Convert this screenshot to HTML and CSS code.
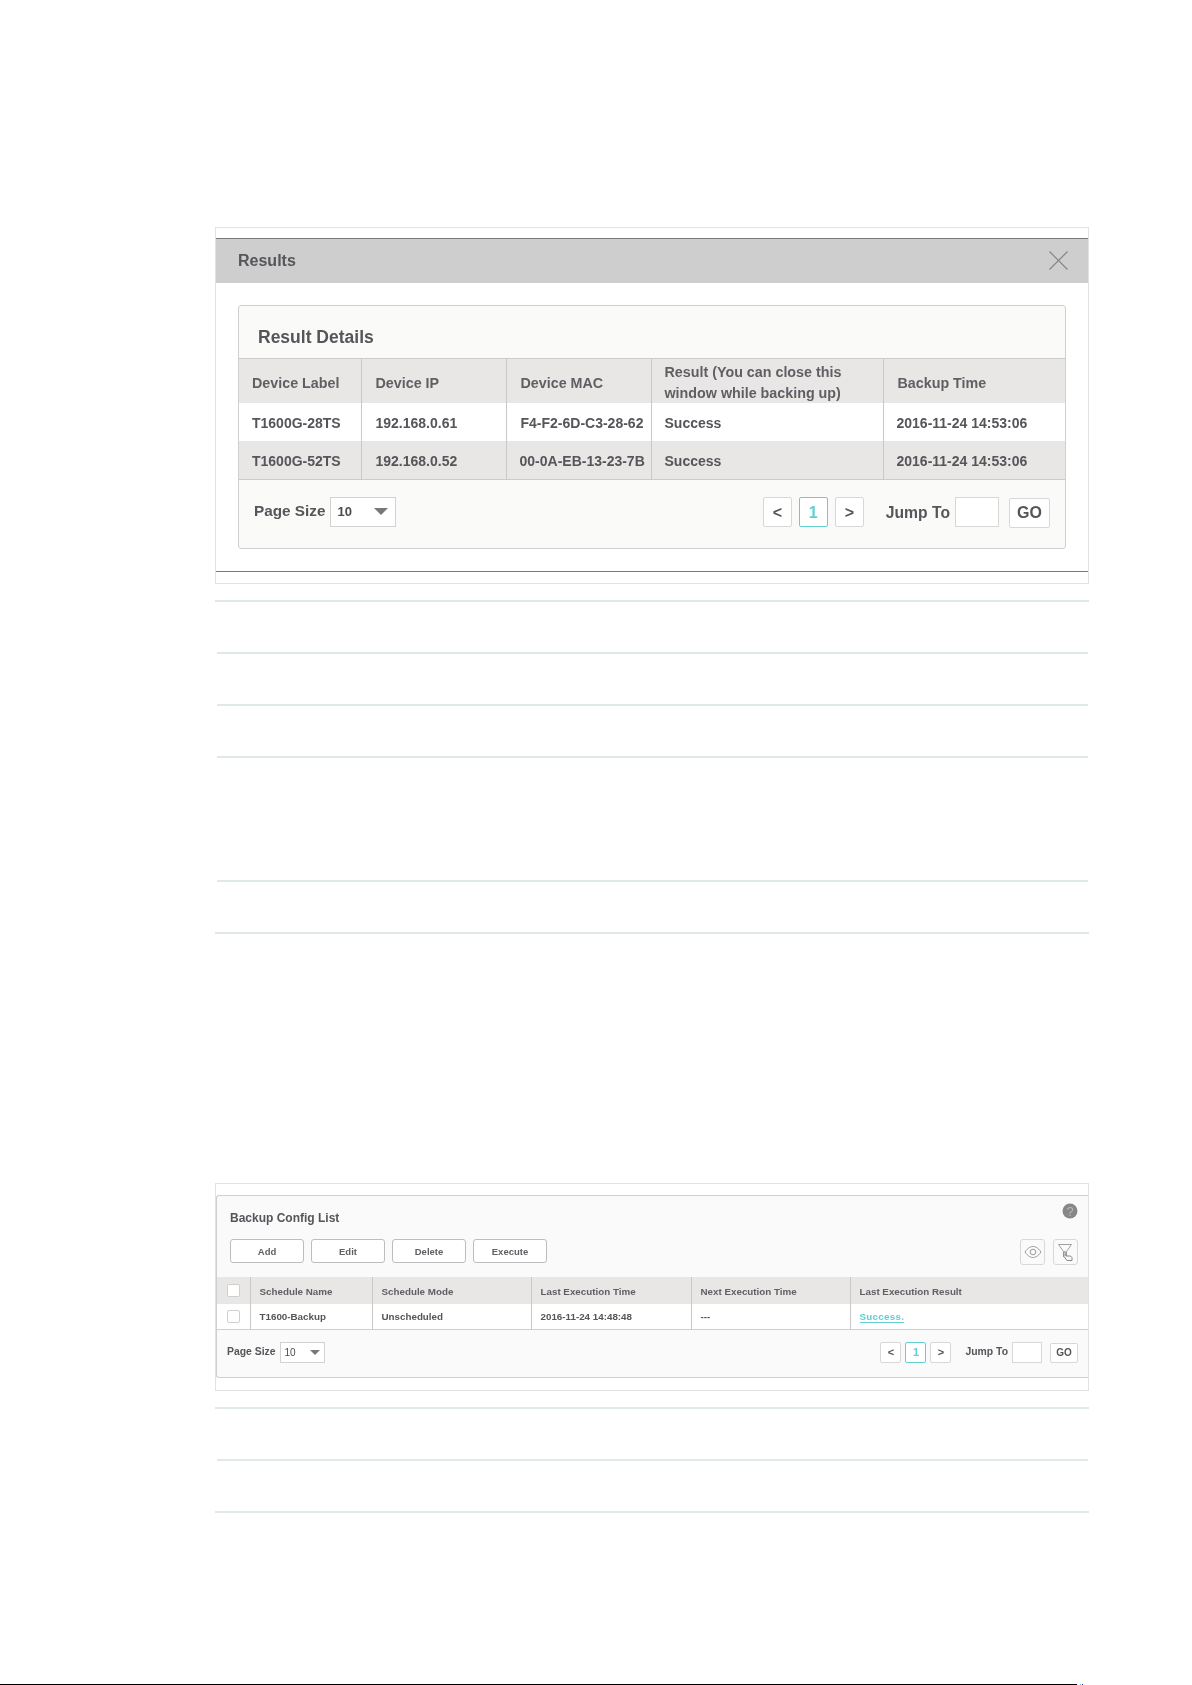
FILE: index.html
```html
<!DOCTYPE html>
<html lang="en">
<head>
<meta charset="utf-8">
<title>Backup Config</title>
<link rel="stylesheet" href="styles.css">
</head>
<body>
<main class="page">
  <figure class="frame frame-results">
    <div class="dialog">
      <header class="dialog-head">
        <h2 class="dialog-title">Results</h2>
        <svg class="close" width="19" height="19" viewBox="0 0 19 19"><path d="M.5.5 18.500 18.500M18.500.5 .5 18.500" fill="none" stroke="#858585" stroke-width="1.200"/></svg>
      </header>
      <section class="panel panel-lg">
        <h3 class="panel-title">Result Details</h3>
        <table class="grid grid-lg">
          <colgroup><col class="c1"><col class="c2"><col class="c3"><col class="c4"><col class="c5"></colgroup>
          <thead>
            <tr><th>Device Label</th><th>Device IP</th><th>Device MAC</th><th class="two-line">Result (You can close this window while backing up)</th><th>Backup Time</th></tr>
          </thead>
          <tbody>
            <tr><td>T1600G-28TS</td><td>192.168.0.61</td><td>F4-F2-6D-C3-28-62</td><td>Success</td><td>2016-11-24 14:53:06</td></tr>
            <tr class="alt"><td>T1600G-52TS</td><td>192.168.0.52</td><td>00-0A-EB-13-23-7B</td><td>Success</td><td>2016-11-24 14:53:06</td></tr>
          </tbody>
        </table>
        <footer class="pager pager-lg">
          <span class="label">Page Size</span>
          <span class="select">10<i class="caret"></i></span>
          <span class="spacer"></span>
          <span class="pg">&lt;</span><span class="pg on">1</span><span class="pg">&gt;</span>
          <span class="label jump">Jump To</span>
          <span class="jump-input"></span>
          <span class="go">GO</span>
        </footer>
      </section>
    </div>
  </figure>

  <div class="rule r1"></div>
  <div class="rule inset r2"></div>
  <div class="rule inset r3"></div>
  <div class="rule inset r4"></div>
  <div class="rule inset r5"></div>
  <div class="rule r6"></div>

  <figure class="frame frame-list">
    <section class="panel panel-sm">
      <div class="list-top">
        <h3 class="list-title">Backup Config List</h3>
        <svg class="help" width="16" height="16" viewBox="0 0 16 16"><circle cx="8" cy="8" r="7.500" fill="#87878a"/><text x="8" y="12.500" text-anchor="middle" class="help-mark">?</text></svg>
      </div>
      <div class="toolbar">
        <span class="btn">Add</span><span class="btn">Edit</span><span class="btn">Delete</span><span class="btn">Execute</span>
        <span class="spacer"></span>
        <span class="icon-btn"><svg width="18" height="14" viewBox="0 0 18 14"><path d="M1 7C4 2.500 7 1.500 9 1.500S14 2.500 17 7C14 11.500 11 12.500 9 12.500S4 11.500 1 7Z" fill="none" stroke="#9a9a9a"/><circle cx="9" cy="7" r="2.800" fill="none" stroke="#9a9a9a"/></svg></span>
        <span class="icon-btn"><svg width="16" height="18" viewBox="0 0 16 18"><path d="M.5 1.500H13.500L8.500 8.500V13M.5 1.500 5.500 8.500V14" fill="none" stroke="#a0a0a0"/><path d="M6 9.500A.9.9 0 0 1 7.800 9.500V13H12.500L14 14.500V17.500H9L6 13.500Z" fill="#fafafa" stroke="#888"/></svg></span>
      </div>
      <table class="grid grid-sm">
        <colgroup><col class="s0"><col class="s1"><col class="s2"><col class="s3"><col class="s4"><col class="s5"></colgroup>
        <thead>
          <tr><th class="chk"><span class="box"></span></th><th>Schedule Name</th><th>Schedule Mode</th><th>Last Execution Time</th><th>Next Execution Time</th><th>Last Execution Result</th></tr>
        </thead>
        <tbody>
          <tr><td class="chk"><span class="box"></span></td><td>T1600-Backup</td><td>Unscheduled</td><td>2016-11-24 14:48:48</td><td>---</td><td><a class="ok">Success.</a></td></tr>
        </tbody>
      </table>
      <footer class="pager pager-sm">
        <span class="label">Page Size</span>
        <span class="select">10<i class="caret"></i></span>
        <span class="spacer"></span>
        <span class="pg">&lt;</span><span class="pg on">1</span><span class="pg">&gt;</span>
        <span class="label jump">Jump To</span>
        <span class="jump-input"></span>
        <span class="go">GO</span>
      </footer>
    </section>
  </figure>

  <div class="rule r7"></div>
  <div class="rule inset r8"></div>
  <div class="rule r9"></div>
</main>
<div class="page-end"></div>
</body>
</html>
```

FILE: styles.css
```css
* { box-sizing: border-box; }
html, body { margin: 0; padding: 0; background: #fff; }
body { height: 1685px; position: relative; overflow: hidden; font-family: "Liberation Sans", Arial, sans-serif; color: #55555a; }
.page { width: 874px; margin-left: 215px; padding-top: 227px; display: flex; flex-direction: column; }
figure { margin: 0; }
h2, h3 { margin: 0; }
.spacer { flex: 1; }

.frame { border: 1px solid #e2e2e2; filter: blur(.3px); }
.frame-results { height: 357px; padding-top: 10px; }
.dialog { height: 334px; border-top: 1px solid #77777c; border-bottom: 1px solid #77777c; }
.dialog-head { height: 44px; background: #cecece; display: flex; align-items: center; justify-content: space-between; padding: 0 20px 0 22px; }
.dialog-title { font-size: 16px; font-weight: bold; color: #55555a; }
.close { margin-top: -1px; }

.panel { background: #fafaf8; border: 1px solid #cfcfcf; border-radius: 3px; }
.panel-lg { margin: 22px 22px 0 22px; height: 244px; }
.panel-title { height: 52px; padding: 21px 0 0 19px; font-size: 17.500px; line-height: 20px; font-weight: bold; color: #55555a; }

.grid { width: 100%; border-collapse: collapse; table-layout: fixed; }
.grid th, .grid td { padding: 0; font-weight: bold; text-align: left; border-left: 1px solid #c9c9c9; }
.grid th:first-child, .grid td:first-child { border-left: 0; }
.grid thead th { background: #e8e7e5; }
.grid tbody tr { background: #fff; }
.grid tbody tr.alt { background: #e8e7e5; }

.grid-lg { border-top: 1px solid #cbcbcb; border-bottom: 1px solid #cbcbcb; font-size: 14px; }
.grid-lg th { height: 44px; line-height: 20.500px; padding: 5px 12px 0 13px; font-size: 14.300px; color: #5f5f64; }
.grid-lg th.two-line { padding-top: 3px; }
.grid-lg th:nth-child(2), .grid-lg th:nth-child(3), .grid-lg th:nth-child(5) { padding-left: 14px; }
.grid-lg td { height: 38px; padding: 1px 0 0 13px; }
.grid-lg .alt td { padding-top: 2px; }
.grid-lg td:nth-child(2), .grid-lg td:nth-child(3) { padding-left: 14px; }
.grid-lg .alt td:nth-child(3) { padding-left: 13px; }
.c1 { width: 122px; } .c2 { width: 145px; } .c3 { width: 145px; } .c4 { width: 232px; } .c5 { width: auto; }

.pager { display: flex; align-items: flex-start; }
.pager-lg { height: 68px; padding: 17px 15px 0 15px; font-size: 15.300px; }
.label { font-weight: bold; color: #55555a; }
.select { background: #fff; border: 1px solid #d2d2d2; display: flex; align-items: center; justify-content: space-between; font-weight: bold; color: #4b4b4b; }
.caret { width: 0; height: 0; border-left: 7px solid transparent; border-right: 7px solid transparent; border-top: 7px solid #77777c; }
.pg { background: #fff; border: 1px solid #d8d8d8; border-radius: 2px; display: flex; align-items: center; justify-content: center; font-weight: bold; color: #55555a; }
.pg.on { border-color: #63cfcf; color: #63cfcf; }
.jump-input { background: #fff; border: 1px solid #d8d8d8; }
.go { background: #fff; border: 1px solid #d8d8d8; border-radius: 2px; display: flex; align-items: center; justify-content: center; font-weight: bold; color: #55555a; }

.pager-lg .label { line-height: 28px; }
.pager-lg .select { width: 66px; height: 30px; margin-left: 5px; padding: 0 7px 0 6px; font-size: 13px; }
.pager-lg .pg { width: 29px; height: 30px; margin-right: 7px; padding-top: 3px; font-size: 16px; }
.pager-lg .jump { margin-left: 15px; line-height: 31px; font-size: 15.700px; }
.pager-lg .jump-input { width: 44px; height: 30px; margin-left: 5px; }
.pager-lg .go { width: 41px; height: 30px; margin: 1px 0 0 10px; font-size: 16px; }

.rule { height: 2px; background: #dfe9ea; }
.rule.inset { margin-left: 2px; margin-right: 1px; }
.r1 { margin-top: 16px; }
.r2, .r3, .r4, .r6, .r8, .r9 { margin-top: 50px; }
.r5 { margin-top: 122px; }

.frame-list { margin-top: 249px; height: 208px; padding-top: 11px; }
.panel-sm { height: 183px; background: #fafafa; border-right: 0; border-radius: 3px 0 0 3px; }
.list-top { height: 43px; padding: 7px 10px 0 13px; display: flex; justify-content: space-between; align-items: flex-start; }
.list-title { font-size: 12px; line-height: 16px; margin-top: 7px; font-weight: bold; color: #55555a; }
.help-mark { font: 13px "Liberation Sans", sans-serif; fill: #b8b8b8; }
.toolbar { height: 38px; padding: 0 10px 0 13px; display: flex; gap: 7px; align-items: flex-start; }
.btn { width: 74px; height: 24px; background: #fff; border: 1px solid #bdbdbd; border-radius: 3px; display: flex; align-items: center; justify-content: center; font-size: 9.500px; font-weight: bold; color: #5f5f64; }
.icon-btn { width: 25px; height: 26px; margin-left: 1px; background: #fafafa; border: 1px solid #d8d8d8; border-radius: 3px; display: flex; align-items: center; justify-content: center; }

.grid-sm { font-size: 9.800px; border-bottom: 1px solid #cfcfcf; }
.grid-sm th { height: 27px; padding: 2px 0 0 9px; color: #5f5f64; }
.grid-sm td { height: 25px; padding-left: 9px; }
.grid-sm .chk { padding: 0 0 0 10px; }
.s0 { width: 33px; } .s1 { width: 122px; } .s2 { width: 159px; } .s3 { width: 160px; } .s4 { width: 159px; } .s5 { width: auto; }
.box { display: block; width: 13px; height: 13px; background: #fff; border: 1px solid #cfcfcf; border-radius: 2px; }
.ok { color: #63cfcf; border-bottom: 1px solid #63cfcf; letter-spacing: .3px; }

.pager-sm { height: 47px; padding: 12px 10px 0 10px; font-size: 10.400px; }
.pager-sm .label { line-height: 20px; }
.pager-sm .select { width: 45px; height: 21px; margin-left: 4px; padding: 0 4px 0 4px; font-size: 10px; font-weight: normal; }
.pager-sm .caret { border-left-width: 5px; border-right-width: 5px; border-top-width: 5px; }
.pager-sm .pg { width: 21px; height: 21px; margin-right: 4px; font-size: 11px; }
.pager-sm .jump { margin-left: 10px; }
.pager-sm .jump-input { width: 30px; height: 21px; margin-left: 4px; }
.pager-sm .go { width: 28px; height: 20px; margin: 1px 0 0 8px; font-size: 10px; }

.r7 { margin-top: 16px; }
.page-end { position: absolute; left: 0; bottom: 0; width: 1077px; height: 1px; background: #000; }
.page-end::after { content: ""; position: absolute; left: 100%; top: 0; width: 7px; height: 1px; background: linear-gradient(90deg, #fff 0 3px, #5fd8e0 3px 4px, #fff 4px 5px, #2a2ae0 5px 6px, #fff 6px); }
```
